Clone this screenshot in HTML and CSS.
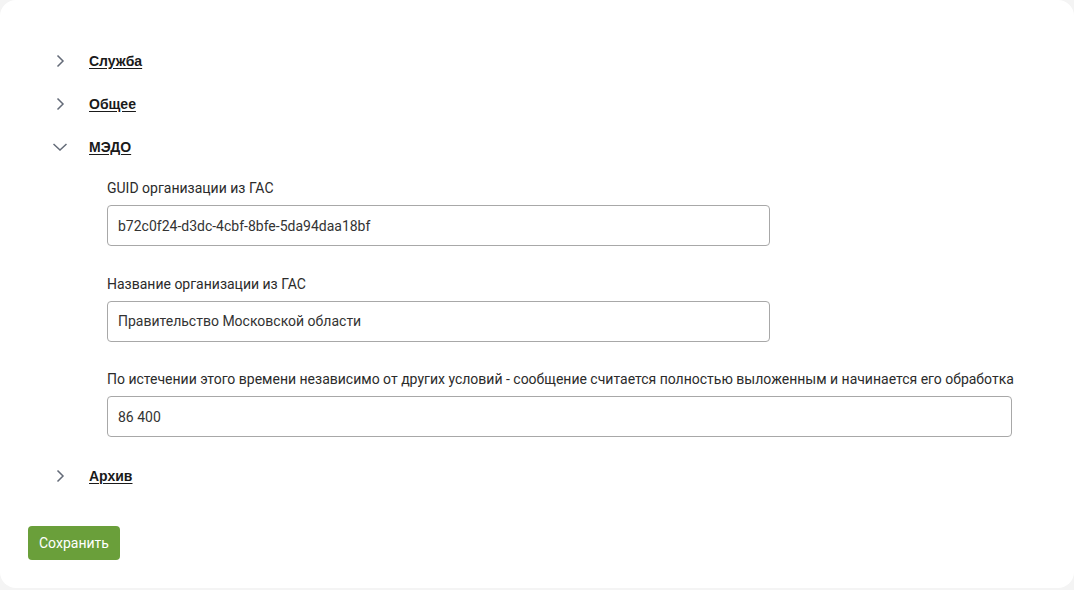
FILE: index.html
```html
<!DOCTYPE html>
<html lang="ru">
<head>
<meta charset="utf-8">
<link rel="stylesheet" href="styles.css">
</head>
<body>
<div class="card">
  <div class="sections">
    <div class="section">
      <div class="section-head">
        <span class="chev"><svg width="14" height="14" viewBox="0 0 14 14"><path d="M4.5 1.5 L10 7 L4.5 12.5" fill="none" stroke="#646b78" stroke-width="1.5"/></svg></span>
        <a class="section-title">Служба</a>
      </div>
    </div>
    <div class="section">
      <div class="section-head">
        <span class="chev"><svg width="14" height="14" viewBox="0 0 14 14"><path d="M4.5 1.5 L10 7 L4.5 12.5" fill="none" stroke="#646b78" stroke-width="1.5"/></svg></span>
        <a class="section-title">Общее</a>
      </div>
    </div>
    <div class="section open">
      <div class="section-head">
        <span class="chev"><svg width="14" height="14" viewBox="0 0 14 14"><path d="M0.5 4 L7 10 L13.5 4" fill="none" stroke="#646b78" stroke-width="1.5"/></svg></span>
        <a class="section-title">МЭДО</a>
      </div>
      <div class="section-body">
        <div class="field">
          <label class="field-label">GUID организации из ГАС</label>
          <div class="input narrow">b72c0f24-d3dc-4cbf-8bfe-5da94daa18bf</div>
        </div>
        <div class="field">
          <label class="field-label">Название организации из ГАС</label>
          <div class="input narrow">Правительство Московской области</div>
        </div>
        <div class="field">
          <label class="field-label">По истечении этого времени независимо от других условий - сообщение считается полностью выложенным и начинается его обработка</label>
          <div class="input wide">86 400</div>
        </div>
      </div>
    </div>
    <div class="section">
      <div class="section-head">
        <span class="chev"><svg width="14" height="14" viewBox="0 0 14 14"><path d="M4.5 1.5 L10 7 L4.5 12.5" fill="none" stroke="#646b78" stroke-width="1.5"/></svg></span>
        <a class="section-title">Архив</a>
      </div>
    </div>
  </div>
  <button class="save-btn">Сохранить</button>
</div>
</body>
</html>
```
FILE: styles.css
```css
html, body {
  margin: 0;
  padding: 0;
}
body {
  background: #f4f4f4;
  font-family: Roboto, "Liberation Sans", Arial, sans-serif;
  color: #222;
  width: 1074px;
  height: 590px;
  overflow: hidden;
}
.card {
  background: #fff;
  border-radius: 16px;
  height: 588px;
  box-sizing: border-box;
  padding: 39px 0 0 28px;
}
.sections {
  display: flex;
  flex-direction: column;
}
.section-head {
  display: flex;
  align-items: center;
  height: 43px;
}
.chev {
  width: 14px;
  height: 14px;
  margin-left: 25px;
  margin-right: 22px;
  display: flex;
}
.section-title {
  font-family: "Liberation Sans", Arial, sans-serif;
  font-weight: 700;
  font-size: 14px;
  color: #1a1a1a;
  text-decoration: underline;
  text-underline-offset: 2px;
}
.section-body {
  padding: 10px 0 17px 79px;
  display: flex;
  flex-direction: column;
  gap: 27.5px;
}
.field {
  display: flex;
  flex-direction: column;
  gap: 7px;
}
.field-label {
  font-size: 14px;
  line-height: 20px;
  color: #2b2b2b;
}
.input {
  box-sizing: border-box;
  height: 41px;
  border: 1px solid #a8a8a8;
  border-radius: 4px;
  padding: 0 10px;
  display: flex;
  align-items: center;
  font-size: 14px;
  color: #333;
}
.input.narrow {
  width: 663px;
}
.input.wide {
  width: 905px;
}
.save-btn {
  margin-top: 29px;
  background: #6a9f3a;
  color: #fff;
  border: none;
  border-radius: 4px;
  height: 34px;
  padding: 0 11px;
  font-family: Roboto, "Liberation Sans", Arial, sans-serif;
  font-size: 14px;
}
```
